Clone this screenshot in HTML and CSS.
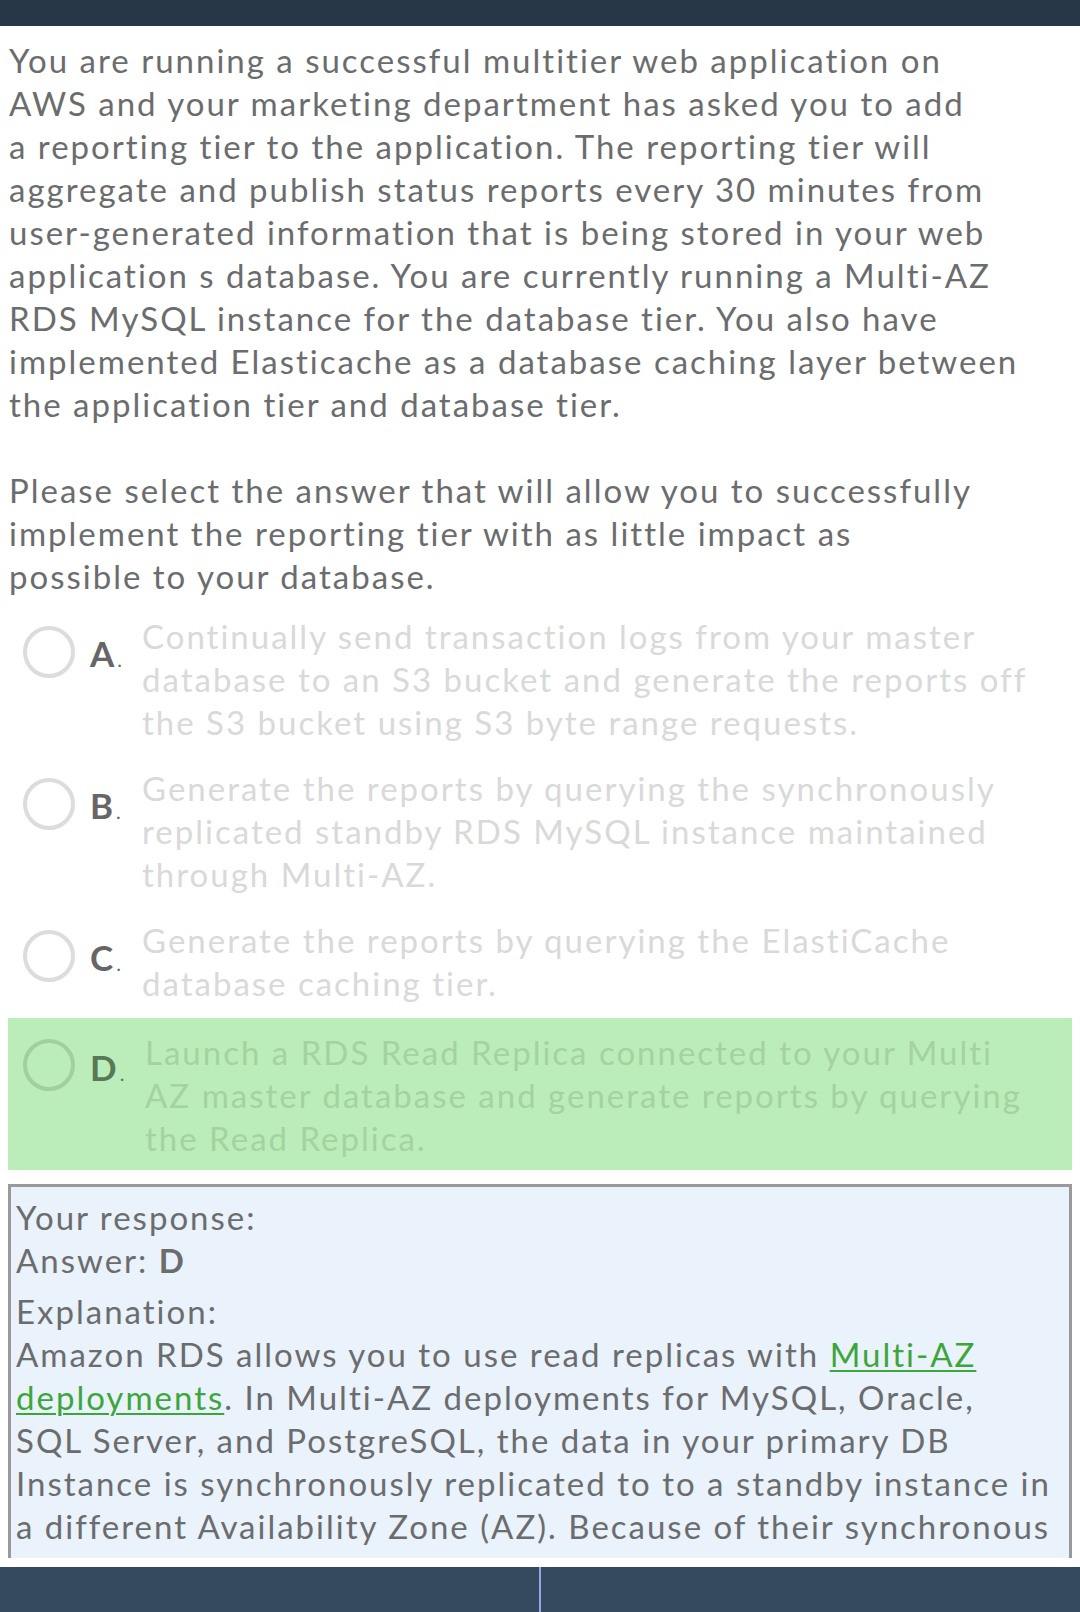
FILE: index.html
```html
<!DOCTYPE html>
<html>
<head>
<meta charset="utf-8">
<link rel="stylesheet" href="styles.css">
</head>
<body>
<header class="topbar"></header>
<main class="content">
  <div class="scroll">
    <p class="question">You are running a successful multitier web application on<br>AWS and your marketing department has asked you to add<br>a reporting tier to the application. The reporting tier will<br>aggregate and publish status reports every 30 minutes from<br>user-generated information that is being stored in your web<br>application s database. You are currently running a Multi-AZ<br>RDS MySQL instance for the database tier. You also have<br>implemented Elasticache as a database caching layer between<br>the application tier and database tier.<br><br>Please select the answer that will allow you to successfully<br>implement the reporting tier with as little impact as<br>possible to your database.</p>
    <div class="options">
      <div class="option">
        <span class="radio"></span>
        <span class="label">A<span class="dot">.</span></span>
        <span class="text">Continually send transaction logs from your master<br>database to an S3 bucket and generate the reports off<br>the S3 bucket using S3 byte range requests.</span>
      </div>
      <div class="option">
        <span class="radio"></span>
        <span class="label">B<span class="dot">.</span></span>
        <span class="text">Generate the reports by querying the synchronously<br>replicated standby RDS MySQL instance maintained<br>through Multi-AZ.</span>
      </div>
      <div class="option">
        <span class="radio"></span>
        <span class="label">C<span class="dot">.</span></span>
        <span class="text">Generate the reports by querying the ElastiCache<br>database caching tier.</span>
      </div>
      <div class="option correct">
        <span class="radio"></span>
        <span class="label">D<span class="dot">.</span></span>
        <span class="text">Launch a RDS Read Replica connected to your Multi<br>AZ master database and generate reports by querying<br>the Read Replica.</span>
      </div>
    </div>
    <div class="response">
      <div>Your response:</div>
      <div>Answer: <b>D</b></div>
      <div class="expl-title">Explanation:</div>
      <div>Amazon RDS allows you to use read replicas with <a href="#" class="link">Multi-AZ<br>deployments</a>. In Multi-AZ deployments for MySQL, Oracle,<br>SQL Server, and PostgreSQL, the data in your primary DB<br>Instance is synchronously replicated to to a standby instance in<br>a different Availability Zone (AZ). Because of their synchronous<br>replication, Multi-AZ deployments for these engines offer<br>greater data durability benefits than do read replicas.</div>
    </div>
  </div>
</main>
<footer class="bottombar">
  <div class="half"></div>
  <div class="divider"></div>
  <div class="half"></div>
</footer>
</body>
</html>
```
FILE: styles.css
```css
html, body {
  margin: 0;
  padding: 0;
  height: 1612px;
  overflow: hidden;
  background: #ffffff;
}
body {
  display: flex;
  flex-direction: column;
  font-family: Lato, "Liberation Sans", sans-serif;
  color: #6b6c6e;
  font-size: 33px;
  line-height: 43px;
  letter-spacing: 2px;
  font-variant-ligatures: none;
}
.topbar {
  height: 26px;
  flex: 0 0 26px;
  background: #283747;
}
.content {
  height: 1532px;
  flex: 0 0 1532px;
  overflow: hidden;
}
.scroll {
  padding: 13px 8px 0 8px;
}
.question {
  margin: 0;
  padding-left: 1px;
}
.options {
  margin-top: 5px;
}
.option {
  display: flex;
  align-items: flex-start;
  padding: 12px 0 11px 0;
}
.radio {
  flex: 0 0 auto;
  width: 44px;
  height: 44px;
  border: 4px solid #dcdcdc;
  border-radius: 50%;
  margin: 11px 0 0 15px;
}
.label {
  flex: 0 0 auto;
  width: 52px;
  margin-left: 15px;
  font-weight: 700;
  font-size: 35px;
  letter-spacing: 0;
  color: #666666;
  padding-top: 17px;
  line-height: 43px;
}
.label .dot {
  font-size: 20px;
  font-weight: 400;
  margin-left: 3px;
}
.text {
  color: #d9d9d9;
}
.option.correct {
  background: #bbedba;
  margin-top: 2px;
  padding: 13px 0 10px 0;
}
.option.correct .radio {
  border-color: #a2cf9f;
  margin-top: 8px;
}
.option.correct .label {
  color: #587856;
  width: 55px;
  padding-top: 15px;
}
.option.correct .text {
  color: #a4d2a1;
}
.response {
  margin-top: 14px;
  border: 3px solid #9a9a9a;
  background: #eaf2fb;
  padding: 9px 5px 40px 5px;
  color: #6b6c6e;
}
.response b {
  font-weight: 700;
}
.expl-title {
  margin-top: 8px;
}
.link {
  color: #3ca63c;
  text-decoration: underline;
  text-decoration-thickness: 2px;
  text-underline-offset: 3px;
}
.bottombar {
  margin-top: 9px;
  height: 45px;
  flex: 0 0 45px;
  background: #34495e;
  display: flex;
}
.half {
  flex: 1 1 0;
}
.divider {
  width: 2px;
  background: #9aa6e0;
}
```
